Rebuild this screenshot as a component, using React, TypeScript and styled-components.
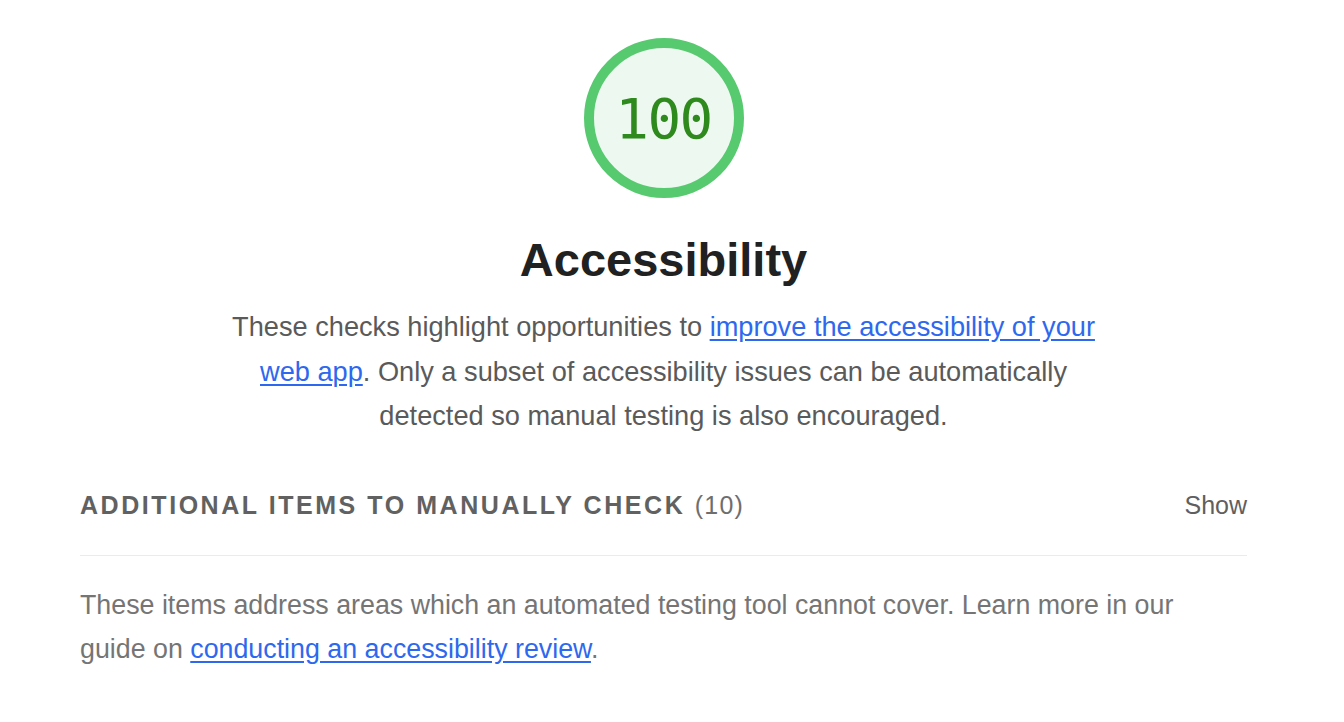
import styled, { createGlobalStyle } from "styled-components";

const GlobalStyle = createGlobalStyle`
  html, body {
    margin: 0;
    padding: 0;
    background: #fff;
  }
  body {
    font-family: "Liberation Sans", Arial, sans-serif;
  }
`;

const Page = styled.div`
  width: 1344px;
  height: 722px;
  box-sizing: border-box;
  padding: 38px 97px 0 80px;
  overflow: hidden;
`;

const Summary = styled.div`
  display: flex;
  flex-direction: column;
  align-items: center;
`;

const Gauge = styled.div`
  width: 160px;
  height: 160px;
  position: relative;
  display: flex;
  align-items: center;
  justify-content: center;
`;

const GaugeSvg = styled.svg`
  position: absolute;
  inset: 0;
`;

const Score = styled.span`
  position: relative;
  font-family: "DejaVu Sans Mono", "Liberation Mono", monospace;
  font-size: 56px;
  color: #2f8a1d;
  letter-spacing: -1.5px;
`;

const Title = styled.h1`
  margin: 33px 0 0;
  font-size: 47px;
  line-height: 58px;
  font-weight: 700;
  color: #212121;
`;

const Description = styled.p`
  margin: 16px 0 0;
  width: 900px;
  text-align: center;
  font-size: 27.2px;
  line-height: 44.5px;
  color: #5a5a5a;
`;

const Link = styled.a`
  color: #2e68ee;
  text-decoration: underline;
  text-underline-offset: 3px;
`;

const Group = styled.section`
  margin-top: 32px;
`;

const GroupHeader = styled.div`
  display: flex;
  justify-content: space-between;
  align-items: center;
  height: 70px;
  border-bottom: 1px solid #ebebeb;
  padding-bottom: 14px;
`;

const GroupTitle = styled.span`
  font-size: 25px;
  font-weight: 700;
  letter-spacing: 2.55px;
  color: #616161;
`;

const Count = styled.span`
  font-weight: 400;
  letter-spacing: 1.2px;
  color: #6e6e6e;
`;

const Toggle = styled.span`
  font-size: 25px;
  color: #5f5f5f;
`;

const GroupText = styled.p`
  margin: 27px 0 0;
  max-width: 1120px;
  font-size: 26.8px;
  line-height: 44.5px;
  color: #757575;
`;

export default function App() {
  return (
    <>
      <GlobalStyle />
      <Page>
        <Summary>
          <Gauge>
            <GaugeSvg width="160" height="160" viewBox="0 0 160 160">
              <circle cx="80" cy="80" r="75" fill="#edf8f0" stroke="#57c96f" strokeWidth="10" />
            </GaugeSvg>
            <Score>100</Score>
          </Gauge>
          <Title>Accessibility</Title>
          <Description>
            These checks highlight opportunities to{" "}
            <Link href="#">improve the accessibility of your web app</Link>. Only a subset of
            accessibility issues can be automatically detected so manual testing is also
            encouraged.
          </Description>
        </Summary>
        <Group>
          <GroupHeader>
            <GroupTitle>
              ADDITIONAL ITEMS TO MANUALLY CHECK <Count>(10)</Count>
            </GroupTitle>
            <Toggle>Show</Toggle>
          </GroupHeader>
          <GroupText>
            These items address areas which an automated testing tool cannot cover. Learn more in our
            guide on <Link href="#">conducting an accessibility review</Link>.
          </GroupText>
        </Group>
      </Page>
    </>
  );
}
